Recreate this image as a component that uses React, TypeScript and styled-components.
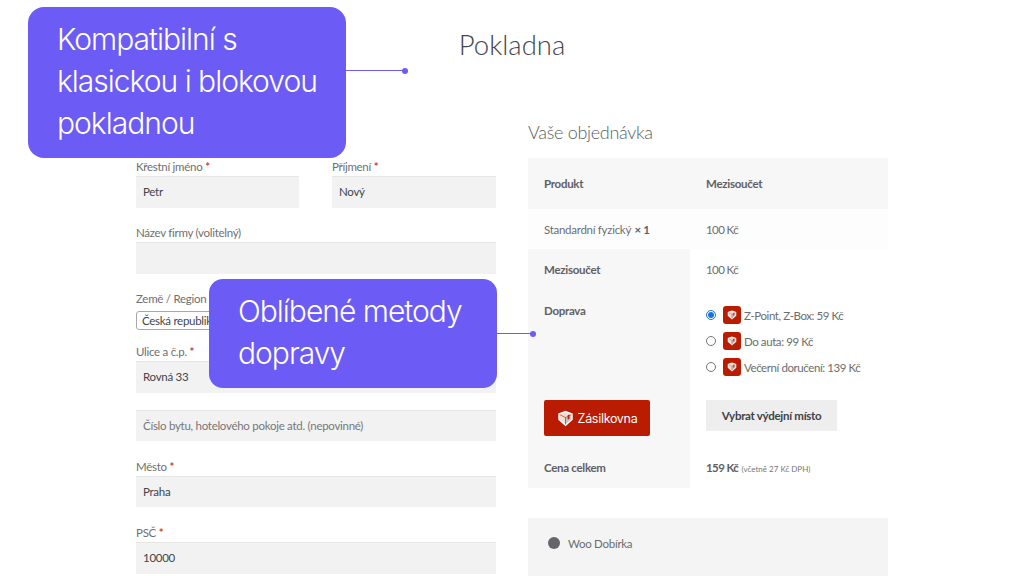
import styled, { createGlobalStyle } from 'styled-components';

const GlobalStyle = createGlobalStyle`
  html, body {
    margin: 0;
    padding: 0;
    background: #fff;
  }
  body {
    font-family: 'Lato', 'Noto Sans', sans-serif;
  }
`;

const Page = styled.div`
  position: relative;
  width: 1024px;
  height: 576px;
  overflow: hidden;
  background: #fff;
  color: #6d6d6d;
  font-family: 'Lato', 'Noto Sans', sans-serif;
  letter-spacing: -0.28px;
`;

const Shop = styled.main`
  width: 752px;
  margin: 0 auto;
  padding-top: 27px;
`;

const Title = styled.h1`
  margin: 0 0 50px;
  height: 36px;
  font-size: 27.5px;
  line-height: 36px;
  font-weight: 300;
  letter-spacing: 0;
  text-align: center;
  color: #43454b;
`;

const Columns = styled.div`
  display: grid;
  grid-template-columns: 360px 360px;
  column-gap: 32px;
  align-items: start;
`;

const Form = styled.form`
  display: flex;
  flex-direction: column;
  padding-top: 45px;
`;

const NameRow = styled.div`
  display: grid;
  grid-template-columns: 163px 164px;
  column-gap: 33px;
`;

const Field = styled.div<{ $top?: number }>`
  display: flex;
  flex-direction: column;
  margin-top: ${(p) => p.$top ?? 0}px;
`;

const Label = styled.label`
  height: 18px;
  font-size: 11.5px;
  line-height: 17px;
  color: #6f6f6f;
`;

const Required = styled.span`
  color: #d0442c;
  font-weight: 700;
`;

const TextInput = styled.input<{ $height?: number }>`
  box-sizing: border-box;
  width: 100%;
  height: ${(p) => p.$height ?? 32}px;
  padding: 0 7px 2px;
  border: 0;
  border-top: 1px solid #e6e6e6;
  border-radius: 0;
  outline: none;
  background: #f2f2f2;
  font-family: inherit;
  font-size: 11.5px;
  letter-spacing: -0.28px;
  color: #43454b;

  &::placeholder {
    color: #777;
    opacity: 1;
  }
`;

const CountrySelect = styled.div`
  box-sizing: border-box;
  height: 19px;
  margin-top: 3px;
  padding: 0 5px;
  border: 1px solid #a8a8a8;
  border-radius: 3px;
  font-size: 11.5px;
  line-height: 17px;
  color: #43454b;
`;

const OrderPanel = styled.section`
  padding-top: 7px;
`;

const OrderHeading = styled.h2`
  margin: 0 0 14px;
  height: 24px;
  font-size: 18px;
  line-height: 24px;
  font-weight: 300;
  letter-spacing: -0.3px;
  color: #5b5d62;
`;

const OrderTable = styled.table`
  width: 360px;
  border-collapse: collapse;
  table-layout: fixed;
  font-size: 11.5px;
  color: #6d6d6d;
`;

const LabelColumn = styled.col`
  width: 162px;
`;

const ValueColumn = styled.col`
  width: 198px;
`;

const HeadRow = styled.tr`
  height: 51px;
  background: #f7f7f7;
`;

const ItemRow = styled.tr`
  height: 40px;
  background: #fdfdfd;
`;

const BodyRow = styled.tr<{ $height: number }>`
  height: ${(p) => p.$height}px;
`;

const HeadCell = styled.th<{ $top?: number }>`
  box-sizing: border-box;
  padding: ${(p) => p.$top ?? 0}px 8px 0 16px;
  text-align: left;
  vertical-align: ${(p) => (p.$top ? 'top' : 'middle')};
  font-weight: 700;
  color: #5f6065;
  background: #f7f7f7;
`;

const ValueCell = styled.td<{ $top?: number }>`
  padding: ${(p) => p.$top ?? 0}px 0 0 16px;
  vertical-align: ${(p) => (p.$top ? 'top' : 'middle')};
  letter-spacing: -0.6px;
`;

const ItemName = styled.td`
  padding-left: 16px;
`;

const Quantity = styled.strong`
  margin-left: 1px;
  color: #5f6065;
`;

const ShippingList = styled.ul`
  display: flex;
  flex-direction: column;
  gap: 8px;
  margin: 0;
  padding: 0;
  list-style: none;
  letter-spacing: -0.42px;
`;

const ShippingOption = styled.li`
  display: flex;
  align-items: center;
  height: 18px;
`;

const Radio = styled.input`
  width: 10px;
  height: 10px;
  margin: 0 7px 0 0;
  accent-color: #1a73d9;
`;

const CarrierIcon = styled.span`
  display: flex;
  align-items: center;
  justify-content: center;
  width: 18px;
  height: 18px;
  margin-right: 3px;
  border-radius: 3px;
  background: #b91c00;
`;

const CarrierLogo = styled.div`
  display: flex;
  align-items: center;
  justify-content: center;
  gap: 4px;
  width: 106px;
  height: 36px;
  border-radius: 2px;
  background: #b91c00;
  font-family: 'Inter', sans-serif;
  font-size: 12.5px;
  font-weight: 400;
  letter-spacing: -0.3px;
  color: #fff;
`;

const PickButton = styled.button`
  display: block;
  width: 131px;
  height: 31px;
  padding: 0;
  border: 0;
  background: #eeeeee;
  font-family: inherit;
  font-size: 11.5px;
  font-weight: 700;
  letter-spacing: -0.28px;
  color: #3f4146;
`;

const Total = styled.strong`
  color: #5f6065;
`;

const TaxNote = styled.small`
  margin-left: 1px;
  font-size: 8px;
  letter-spacing: 0;
  color: #777;
`;

const PaymentBox = styled.div`
  display: flex;
  align-items: center;
  gap: 8px;
  height: 58px;
  margin-top: 30px;
  padding: 0 0 8px 20px;
  box-sizing: border-box;
  background: #f4f4f4;
  font-size: 11.5px;
  color: #6d6d6d;
`;

const PaymentDot = styled.span`
  width: 12px;
  height: 12px;
  border-radius: 50%;
  background: #68656a;
`;

const Callout = styled.div<{ $left: number; $top: number; $width: number; $height: number; $radius: number }>`
  position: absolute;
  left: ${(p) => p.$left}px;
  top: ${(p) => p.$top}px;
  box-sizing: border-box;
  width: ${(p) => p.$width}px;
  height: ${(p) => p.$height}px;
  padding: 11px 0 0 29px;
  border-radius: ${(p) => p.$radius}px;
  background: #6c5bf5;
  font-family: 'Inter', sans-serif;
  font-size: 30px;
  line-height: 42px;
  font-weight: 300;
  letter-spacing: -1px;
  color: #fff;
`;

const Connector = styled.div<{ $left: number; $top: number; $width: number }>`
  position: absolute;
  left: ${(p) => p.$left}px;
  top: ${(p) => p.$top}px;
  width: ${(p) => p.$width}px;
  height: 1px;
  background: #6c5bf5;

  &::after {
    content: '';
    position: absolute;
    right: -3px;
    top: -2.5px;
    width: 6px;
    height: 6px;
    border-radius: 50%;
    background: #6c5bf5;
  }
`;

// cube in a shield, the carrier's mark
const BoxGlyph = ({ size }: { size: number }) => (
  <svg width={size} height={size} viewBox="0 0 20 20" aria-hidden="true">
    <path d="M10 1 18.5 4V11.5L10 19 1.5 11.5V4Z" fill="#fff" />
    <path d="M10 9.5 16.8 5.8V10.8L10 16.8Z" fill="#c9c4c2" />
    <path d="M3.2 5.8 10 9.5V16.8L3.2 10.8Z" fill="#e8dfdb" />
    <path d="M10 2.8 16.2 5 10 8.4 3.8 5Z" fill="#f4d9d2" />
    <path d="M10 8.6V17M3.2 5.4 10 9 16.8 5.4" fill="none" stroke="#b91c00" strokeWidth="0.8" />
    <path d="M12.6 6.2V11.5L14.6 10.2V5.2Z" fill="#b91c00" />
  </svg>
);

const shippingOptions = [
  { label: 'Z-Point, Z-Box: 59 Kč', checked: true },
  { label: 'Do auta: 99 Kč', checked: false },
  { label: 'Večerní doručení: 139 Kč', checked: false },
];

const App = () => {
  return (
    <Page>
      <GlobalStyle />
      <Shop>
        <Title>Pokladna</Title>
        <Columns>
          <Form>
            <NameRow>
              <Field>
                <Label>Křestní jméno <Required>*</Required></Label>
                <TextInput readOnly value="Petr" />
              </Field>
              <Field>
                <Label>Příjmení <Required>*</Required></Label>
                <TextInput readOnly value="Nový" />
              </Field>
            </NameRow>
            <Field $top={16}>
              <Label>Název firmy (volitelný)</Label>
              <TextInput readOnly />
            </Field>
            <Field $top={16}>
              <Label>Země / Region <Required>*</Required></Label>
              <CountrySelect>Česká republika</CountrySelect>
            </Field>
            <Field $top={13}>
              <Label>Ulice a č.p. <Required>*</Required></Label>
              <TextInput readOnly value="Rovná 33" />
            </Field>
            <Field $top={17}>
              <TextInput $height={31} readOnly placeholder="Číslo bytu, hotelového pokoje atd. (nepovinné)" />
            </Field>
            <Field $top={17}>
              <Label>Město <Required>*</Required></Label>
              <TextInput $height={31} readOnly value="Praha" />
            </Field>
            <Field $top={17}>
              <Label>PSČ <Required>*</Required></Label>
              <TextInput readOnly value="10000" />
            </Field>
          </Form>
          <OrderPanel>
            <OrderHeading>Vaše objednávka</OrderHeading>
            <OrderTable>
              <colgroup>
                <LabelColumn />
                <ValueColumn />
              </colgroup>
              <tbody>
                <HeadRow>
                  <HeadCell>Produkt</HeadCell>
                  <HeadCell>Mezisoučet</HeadCell>
                </HeadRow>
                <ItemRow>
                  <ItemName>Standardní fyzický <Quantity>× 1</Quantity></ItemName>
                  <ValueCell>100 Kč</ValueCell>
                </ItemRow>
                <BodyRow $height={41}>
                  <HeadCell>Mezisoučet</HeadCell>
                  <ValueCell>100 Kč</ValueCell>
                </BodyRow>
                <BodyRow $height={100}>
                  <HeadCell $top={14}>Doprava</HeadCell>
                  <ValueCell $top={16}>
                    <ShippingList>
                      {shippingOptions.map((option) => (
                        <ShippingOption key={option.label}>
                          <Radio type="radio" name="shipping" readOnly checked={option.checked} />
                          <CarrierIcon><BoxGlyph size={10} /></CarrierIcon>
                          {option.label}
                        </ShippingOption>
                      ))}
                    </ShippingList>
                  </ValueCell>
                </BodyRow>
                <BodyRow $height={56}>
                  <HeadCell $top={10}>
                    <CarrierLogo><BoxGlyph size={17} />Zásilkovna</CarrierLogo>
                  </HeadCell>
                  <ValueCell $top={10}>
                    <PickButton type="button">Vybrat výdejní místo</PickButton>
                  </ValueCell>
                </BodyRow>
                <BodyRow $height={42}>
                  <HeadCell>Cena celkem</HeadCell>
                  <ValueCell>
                    <Total>159 Kč</Total> <TaxNote>(včetně 27 Kč DPH)</TaxNote>
                  </ValueCell>
                </BodyRow>
              </tbody>
            </OrderTable>
            <PaymentBox>
              <PaymentDot />
              Woo Dobírka
            </PaymentBox>
          </OrderPanel>
        </Columns>
      </Shop>

      <Connector $left={346} $top={70} $width={59} />
      <Callout $left={28} $top={7} $width={318} $height={151} $radius={16}>
        Kompatibilní s<br />klasickou i blokovou<br />pokladnou
      </Callout>

      <Connector $left={497} $top={333} $width={36} />
      <Callout $left={209} $top={279} $width={288} $height={109} $radius={14}>
        Oblíbené metody<br />dopravy
      </Callout>
    </Page>
  );
};

export default App;
